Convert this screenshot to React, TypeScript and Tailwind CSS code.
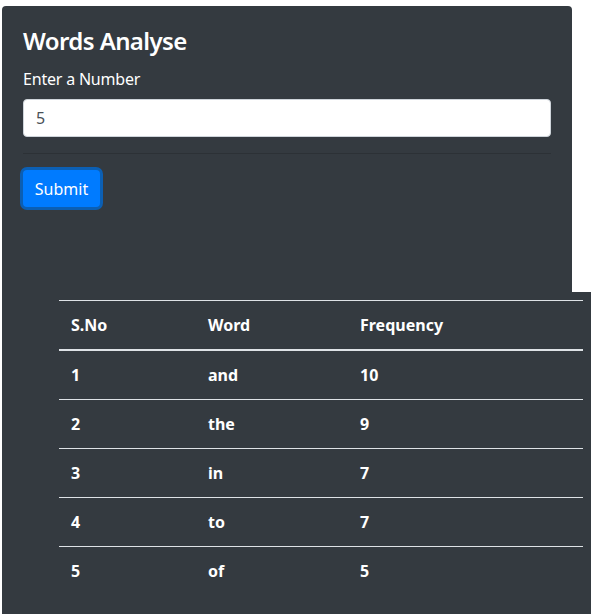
import React from "react";

const rows = [
  { n: 1, w: "and", f: 10 },
  { n: 2, w: "the", f: 9 },
  { n: 3, w: "in", f: 7 },
  { n: 4, w: "to", f: 7 },
  { n: 5, w: "of", f: 5 },
];

export default function App() {
  return (
    <div
      className="pl-[2px] pt-[6px] bg-white min-h-[614px]"
      style={{ fontFamily: '"Noto Sans", "Open Sans", sans-serif' }}
    >
      <div className="w-[570px] h-[286px] bg-[#343a40] rounded-t-[4px] px-[21px] pt-[20px] flex flex-col">
        <h4 className="text-[24px] leading-[29px] font-semibold tracking-[-0.6px] text-white mb-[12px]">Words Analyse</h4>
        <label className="text-[16px] leading-[24px] text-white mb-[8px] tracking-[-0.2px]">Enter a Number</label>
        <input
          readOnly
          value="5"
          className="h-[38px] w-[528px] rounded-[4px] border border-[#ced4da] bg-white px-[12px] text-[16px] text-[#495057] outline-none"
        />
        <div className="mt-[16px] h-px w-[528px] bg-[#2c3136]" />
        <div className="mt-[16px]">
          <button className="h-[37px] w-[77px] rounded-[4px] bg-[#007bff] text-white text-[16px] leading-[24px] ring-[3px] ring-[#0b5fb4]">
            Submit
          </button>
        </div>
      </div>
      <div className="w-[589px] bg-[#343a40] pt-[8px] pl-[57px] pb-[20px]">
        <table className="w-[524px] border-collapse text-white text-[16px] leading-[24px] font-bold">
          <thead>
            <tr>
              <th className="w-[137px] text-left p-[12px] border-t border-b-2 border-[#dee2e6]">S.No</th>
              <th className="w-[152px] text-left p-[12px] border-t border-b-2 border-[#dee2e6]">Word</th>
              <th className="text-left p-[12px] border-t border-b-2 border-[#dee2e6]">Frequency</th>
            </tr>
          </thead>
          <tbody>
            {rows.map((r) => (
              <tr key={r.n}>
                <td className="p-[12px] border-t border-[#dee2e6]">{r.n}</td>
                <td className="p-[12px] border-t border-[#dee2e6]">{r.w}</td>
                <td className="p-[12px] border-t border-[#dee2e6]">{r.f}</td>
              </tr>
            ))}
          </tbody>
        </table>
      </div>
    </div>
  );
}
